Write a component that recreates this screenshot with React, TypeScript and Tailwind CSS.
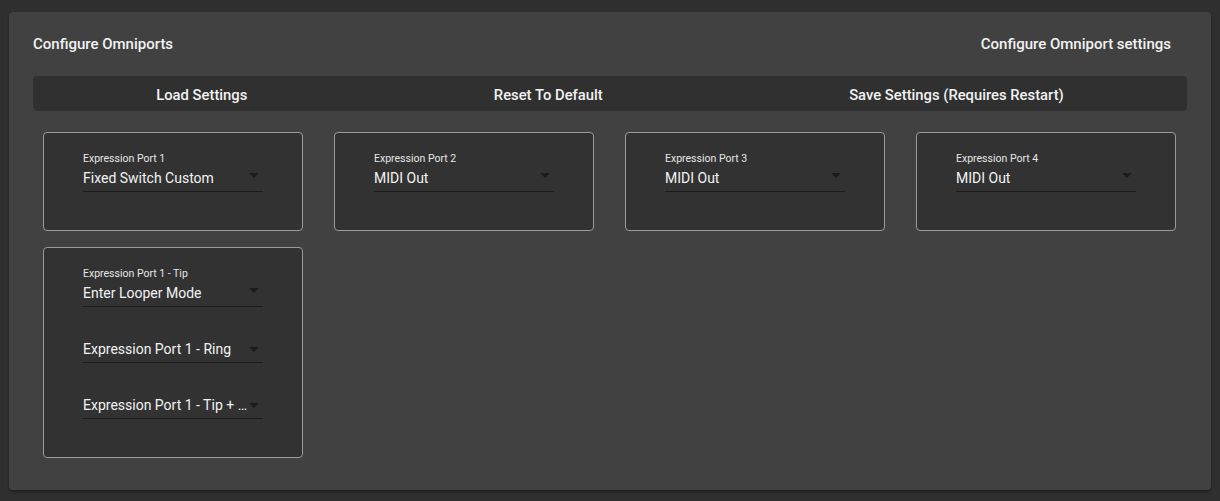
const ports = ["Expression Port 1", "Expression Port 2", "Expression Port 3", "Expression Port 4"];
const values = ["Fixed Switch Custom", "MIDI Out", "MIDI Out", "MIDI Out"];

function Arrow() {
  return (
    <svg className="pointer-events-none absolute right-[4px] top-[8px]" width="10" height="5" viewBox="0 0 10 5">
      <path d="M0 0 L10 0 L5 5 Z" fill="#1c1c1c" />
    </svg>
  );
}

function Select({ label, value }: { label?: string; value: string }) {
  return (
    <div className="w-[180px]">
      {label ? <p className="text-[10.5px] leading-[12px] text-[#e6e6e6]">{label}</p> : null}
      <div className={`relative border-b border-[#1c1c1c] pb-[3px] ${label ? "pt-[3px]" : "mt-[32px]"}`}>
        <p className="truncate pr-[15px] text-[14px] leading-[20px] text-[#f2f2f2]">{value}</p>
        <Arrow />
      </div>
    </div>
  );
}

export default function App() {
  return (
    <div className="min-h-screen bg-[#2f2f2f] px-[9px] pt-3" style={{ fontFamily: "Roboto, 'Liberation Sans', sans-serif" }}>
      <div className="h-[478px] rounded-[4px] bg-[#414141] px-6 pt-[22px] shadow-[0_2px_3px_rgba(0,0,0,0.35)]">
        <div className="flex h-5 items-center justify-between text-[15px] font-medium text-[#f2f2f2]">
          <span>Configure Omniports</span>
          <span className="pr-4">Configure Omniport settings</span>
        </div>

        <div className="mt-[22px] flex h-[35px] rounded-[4px] bg-[#303030] pt-[3px] text-[14.8px] font-medium text-[#f2f2f2]">
          <button className="grow">Load Settings</button>
          <button className="grow">Reset To Default</button>
          <button className="grow">Save Settings (Requires Restart)</button>
        </div>

        <div className="mt-[21px] grid grid-cols-4 gap-x-[31px] gap-y-[16px] pl-[10px] pr-[11px]">
          {ports.map((port, i) => (
            <div className="h-[99px] rounded-[4px] border border-[#9a9a9a] bg-[#323232] pl-[39px] pt-[20px]" key={port}>
              <Select label={port} value={values[i]} />
            </div>
          ))}
          <div className="h-[211px] rounded-[4px] border border-[#9a9a9a] bg-[#323232] pl-[39px] pt-[20px]">
            <Select label="Expression Port 1 - Tip" value="Enter Looper Mode" />
            <Select value="Expression Port 1 - Ring" />
            <Select value="Expression Port 1 - Tip + Ring" />
          </div>
        </div>
      </div>
    </div>
  );
}
